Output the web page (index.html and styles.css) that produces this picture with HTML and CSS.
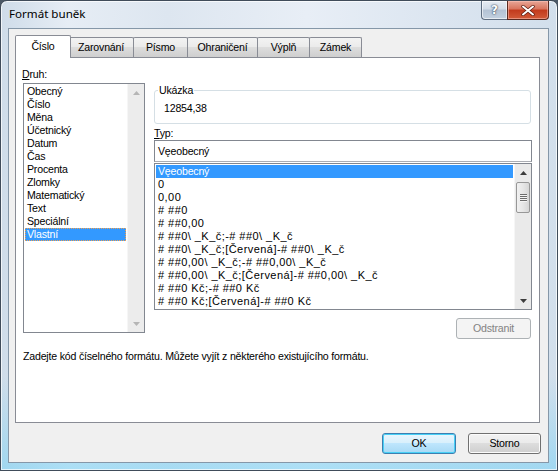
FILE: index.html
```html
<!DOCTYPE html>
<html lang="cs">
<head>
<meta charset="utf-8">
<title>Formát buněk</title>
<link rel="stylesheet" href="styles.css">
</head>
<body>
<div class="window">
  <div class="titlebar">
    <span class="title">Formát buněk</span>
    <div class="caption-btns">
      <div class="cap-help">?</div>
      <div class="cap-close">
        <svg width="14" height="11" viewBox="0 0 14 11"><path d="M2 1.5 L12 9.5 M12 1.5 L2 9.5" stroke="#5a1a10" stroke-width="3.4" stroke-linecap="round"/><path d="M2 1.5 L12 9.5 M12 1.5 L2 9.5" stroke="#ffffff" stroke-width="2" stroke-linecap="round"/></svg>
      </div>
    </div>
  </div>
  <div class="client">
    <div class="tabs">
      <div class="tab active w-cislo">Číslo</div>
      <div class="tab w-zar">Zarovnání</div>
      <div class="tab w-pismo">Písmo</div>
      <div class="tab w-ohr">Ohraničení</div>
      <div class="tab w-vypln">Výplň</div>
      <div class="tab w-zamek">Zámek</div>
    </div>
    <div class="panel">
      <div class="columns">
        <div class="left">
          <div class="label"><u>D</u>ruh:</div>
          <div class="listbox">
            <div class="items">
              <div class="item">Obecný</div>
              <div class="item">Číslo</div>
              <div class="item">Měna</div>
              <div class="item">Účetnický</div>
              <div class="item">Datum</div>
              <div class="item">Čas</div>
              <div class="item">Procenta</div>
              <div class="item">Zlomky</div>
              <div class="item">Matematický</div>
              <div class="item">Text</div>
              <div class="item">Speciální</div>
              <div class="item sel focus">Vlastní</div>
            </div>
            <div class="vscroll disabled">
              <div class="arrow up"><svg width="7" height="4" viewBox="0 0 7 4"><path d="M0 4 L3.5 0 L7 4Z" fill="#b5b5b5"/></svg></div>
              <div class="track"></div>
              <div class="arrow down"><svg width="7" height="4" viewBox="0 0 7 4"><path d="M0 0 L3.5 4 L7 0Z" fill="#b5b5b5"/></svg></div>
            </div>
          </div>
        </div>
        <div class="right">
          <fieldset class="sample">
            <legend>Ukázka</legend>
            <div class="sample-value">12854,38</div>
          </fieldset>
          <div class="label typ"><u>T</u>yp:</div>
          <div class="textbox">Vęeobecný</div>
          <div class="typelist">
            <div class="items">
              <div class="item sel">Vęeobecný</div>
              <div class="item code">0</div>
              <div class="item code">0,00</div>
              <div class="item code"># ##0</div>
              <div class="item code"># ##0,00</div>
              <div class="item code"># ##0\ _K_č;-# ##0\ _K_č</div>
              <div class="item code"># ##0\ _K_č;[Červená]-# ##0\ _K_č</div>
              <div class="item code"># ##0,00\ _K_č;-# ##0,00\ _K_č</div>
              <div class="item code"># ##0,00\ _K_č;[Červená]-# ##0,00\ _K_č</div>
              <div class="item code"># ##0 Kč;-# ##0 Kč</div>
              <div class="item code"># ##0 Kč;[Červená]-# ##0 Kč</div>
            </div>
            <div class="vscroll">
              <div class="arrow up"><svg width="7" height="4" viewBox="0 0 7 4"><path d="M0 4 L3.5 0 L7 4Z" fill="#3c3c3c"/></svg></div>
              <div class="track">
                <div class="thumb"><span></span><span></span><span></span><span></span></div>
              </div>
              <div class="arrow down"><svg width="7" height="4" viewBox="0 0 7 4"><path d="M0 0 L3.5 4 L7 0Z" fill="#3c3c3c"/></svg></div>
            </div>
          </div>
          <div class="btn-row">
            <button class="btn disabled-btn" disabled>Odstranit</button>
          </div>
        </div>
      </div>
      <p class="hint">Zadejte kód číselného formátu. Můžete vyjít z některého existujícího formátu.</p>
    </div>
    <div class="footer">
      <button class="btn default">OK</button>
      <button class="btn">Storno</button>
    </div>
  </div>
</div>
</body>
</html>
```
FILE: styles.css
```css
* { box-sizing: border-box; }
html, body { margin: 0; padding: 0; }
body {
  width: 558px;
  height: 471px;
  overflow: hidden;
  background: #4b5866;
  font-family: "Liberation Sans", Arial, sans-serif;
  font-size: 10.6px;
  letter-spacing: -0.2px;
  color: #000;
}
.window {
  width: 558px;
  height: 471px;
  border: 1px solid #404c5a;
  border-radius: 7px 7px 0 0;
  background:
    linear-gradient(to bottom, rgba(255,255,255,0) 80%, rgba(120,210,245,0.55) 100%),
    linear-gradient(to right, #cfdce9 0%, #e6edf5 12%, #dde6f0 30%, #e8eef6 55%, #dbe5f0 80%, #d2dfec 100%);
  display: flex;
  flex-direction: column;
  box-shadow: inset 0 0 0 1px rgba(255,255,255,0.7);
}
.titlebar {
  height: 26px;
  flex: none;
  display: flex;
  align-items: flex-start;
  justify-content: space-between;
  padding-left: 8px;
}
.title {
  font-family: "Noto Sans", "Open Sans", sans-serif;
  font-size: 11.6px;
  letter-spacing: 0;
  line-height: 14px;
  margin-top: 6px;
  color: #000;
}
.caption-btns {
  display: flex;
  margin-right: 8px;
}
.cap-help {
  width: 26px;
  height: 19px;
  border: 1px solid #5e6d80;
  border-top: none;
  border-right: none;
  border-radius: 0 0 0 4px;
  background: linear-gradient(to bottom, #e6ecf3 0%, #d2dce8 45%, #b3c2d4 50%, #c3d1e0 100%);
  box-shadow: inset 0 0 0 1px rgba(255,255,255,0.6);
  color: #fff;
  font-family: "DejaVu Sans", sans-serif;
  font-weight: bold;
  font-size: 12px;
  letter-spacing: 0;
  line-height: 18px;
  text-align: center;
  text-shadow: 0 0 2px #2c3b50, 0 0 1px #2c3b50;
}
.cap-close {
  width: 42px;
  height: 19px;
  border: 1px solid #5a2a20;
  border-top: none;
  border-radius: 0 0 4px 0;
  background: linear-gradient(to bottom, #e7a697 0%, #d8735c 45%, #c23a1c 50%, #d25a38 100%);
  box-shadow: inset 0 0 0 1px rgba(255,200,190,0.5);
  display: flex;
  align-items: center;
  justify-content: center;
}
.client {
  flex: 1;
  margin: 1px 8px 8px 7px;
  border: 1px solid #8597a8;
  background: #f0f0f0;
  display: flex;
  flex-direction: column;
  padding: 6px 7px 8px 6px;
}
.tabs {
  display: flex;
  align-items: flex-end;
  height: 22px;
  position: relative;
  z-index: 2;
}
.tab {
  height: 20px;
  border: 1px solid #898c95;
  border-bottom: none;
  margin-left: -1px;
  background: linear-gradient(to bottom, #f3f3f3 0%, #ebebeb 45%, #dddddd 50%, #cfcfcf 100%);
  text-align: center;
  line-height: 18px;
  border-radius: 2px 2px 0 0;
}
.tab.active {
  height: 23px;
  background: #fff;
  margin-left: 0;
  margin-right: -2px;
  margin-bottom: -1px;
  position: relative;
  z-index: 3;
  line-height: 21px;
}
.w-cislo { width: 56px; }
.w-zar { width: 66px; margin-left: -1px; }
.w-pismo { width: 55px; }
.w-ohr { width: 71px; }
.w-vypln { width: 53px; }
.w-zamek { width: 53px; }
.panel {
  height: 366px;
  margin-right: 1px;
  border: 1px solid #898c95;
  background: #fff;
  padding: 10px 7px 0 7px;
  display: flex;
  flex-direction: column;
}
.columns {
  display: flex;
  gap: 9px;
}
.label {
  line-height: 13px;
  height: 13px;
}
.label u { text-decoration: underline; text-underline-offset: 1px; }
.left .label { margin-left: -1px; margin-bottom: 2px; }
.listbox {
  width: 122px;
  height: 250px;
  border: 1px solid #828790;
  display: flex;
  background: #fff;
}
.items {
  flex: 1;
  padding: 1px 1px 0 1px;
  overflow: hidden;
}
.item {
  height: 13px;
  line-height: 13px;
  padding-left: 2px;
  white-space: nowrap;
}
.item.code {
  font-size: 11px;
  letter-spacing: 0.45px;
}
.item.sel {
  background: #3399ff;
  color: #fff;
}
.item.focus {
  outline: 1px dotted #f0a050;
  outline-offset: -1px;
}
.vscroll {
  width: 17px;
  flex: none;
  display: flex;
  flex-direction: column;
  background: #ececec;
  border-left: 1px solid #f6f6f6;
}
.vscroll .arrow {
  height: 17px;
  display: flex;
  align-items: center;
  justify-content: center;
}
.vscroll .track { flex: 1; }
.typelist .vscroll { background: #eaeaea; }
.thumb {
  height: 31px;
  margin: 1px 1px 0 1px;
  border: 1px solid #979797;
  border-radius: 2px;
  background: linear-gradient(to right, #f1f1f1 0%, #e6e6e6 50%, #d6d6d6 100%);
  display: flex;
  flex-direction: column;
  align-items: center;
  justify-content: center;
  gap: 1px;
}
.thumb span {
  width: 7px;
  height: 1px;
  background: #6c6c6c;
  box-shadow: 0 1px 0 #f4f4f4;
}
.right {
  flex: 1;
  padding-top: 16px;
}
.sample {
  margin: 0;
  padding: 5px 9px 7px 9px;
  border: 1px solid #d5dfe5;
  border-radius: 3px;
  height: 40px;
  width: 377px;
}
.sample legend {
  padding: 0 1px;
  margin-left: -6px;
  line-height: 13px;
}
.sample-value {
  line-height: 13px;
}
.label.typ { margin-top: 3px; }
.textbox {
  width: 378px;
  height: 22px;
  border: 1px solid #828790;
  border-bottom-color: #abadb3;
  line-height: 20px;
  padding-left: 3px;
}
.typelist {
  margin-top: 1px;
  width: 378px;
  height: 147px;
  border: 1px solid #828790;
  display: flex;
}
.btn-row {
  display: flex;
  justify-content: flex-end;
  margin-top: 8px;
  padding-right: 1px;
}
.btn {
  font-family: "Liberation Sans", Arial, sans-serif;
  font-size: 10.6px;
  letter-spacing: -0.2px;
  height: 21px;
  width: 75px;
  border: 1px solid #707070;
  border-radius: 3px;
  background: linear-gradient(to bottom, #f2f2f2 0%, #ebebeb 45%, #dddddd 50%, #cfcfcf 100%);
  box-shadow: inset 0 0 0 1px #fbfbfb;
  color: #000;
  padding: 0;
  line-height: 17px;
}
.btn.disabled-btn {
  border-color: #adb2b5;
  background: #f4f4f4;
  color: #838383;
  box-shadow: none;
}
.btn.default {
  border-color: #3c7fb1;
  box-shadow: inset 0 0 0 1px #48d0f6;
  background: linear-gradient(to bottom, #eaf6fd 0%, #d9f0fc 45%, #bee6fd 50%, #a7d9f5 100%);
}
.hint {
  margin: 11px 0 0 0;
  line-height: 13px;
}
.footer {
  display: flex;
  justify-content: flex-end;
  gap: 12px;
  margin-top: 10px;
}
.footer .btn { width: 73px; }
.footer .btn.default { width: 74px; }
```
